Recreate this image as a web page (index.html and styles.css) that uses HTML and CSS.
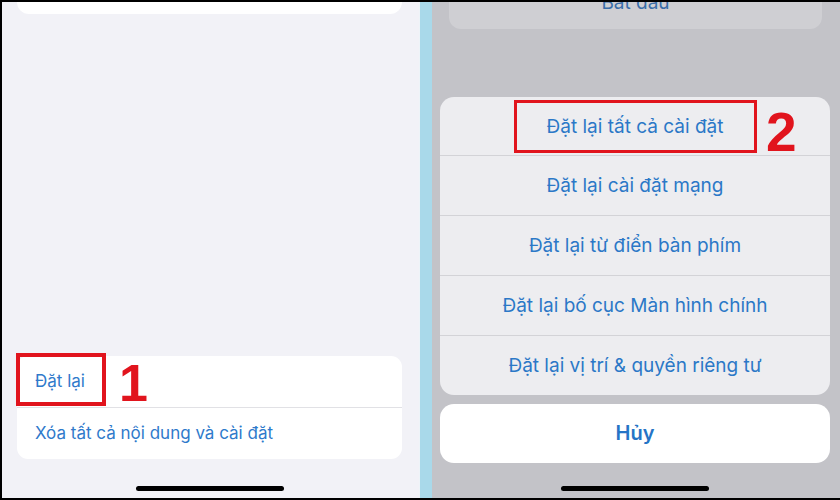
FILE: index.html
```
<!DOCTYPE html>
<html lang="vi">
<head>
    <meta charset="utf-8">
    <title>Đặt lại</title>
    <link rel="stylesheet" href="styles.css">
</head>
<body>
    <div class="frame">
        <!-- Left screen: Settings > Transfer or Reset -->
        <div class="screen screen-left">
            <div class="stub-card"></div>
            <div class="spacer"></div>
            <div class="list-card">
                <div class="list-row">Đặt lại</div>
                <div class="list-row">Xóa tất cả nội dung và cài đặt</div>
                <div class="mark-box mark-box-1"></div>
                <div class="mark-num mark-num-1">1</div>
            </div>
            <div class="home-bar"></div>
        </div>

        <div class="divider"></div>

        <!-- Right screen: reset action sheet -->
        <div class="screen screen-right">
            <div class="stub-card dim"><span>Bắt đầu</span></div>
            <div class="spacer"></div>
            <div class="sheet">
                <div class="sheet-row first">
                    <span class="mark-box mark-box-2">Đặt lại tất cả cài đặt</span>
                    <span class="mark-num mark-num-2">2</span>
                </div>
                <div class="sheet-row">Đặt lại cài đặt mạng</div>
                <div class="sheet-row">Đặt lại từ điển bàn phím</div>
                <div class="sheet-row">Đặt lại bố cục Màn hình chính</div>
                <div class="sheet-row">Đặt lại vị trí &amp; quyền riêng tư</div>
            </div>
            <div class="cancel">Hủy</div>
            <div class="home-bar"></div>
        </div>
    </div>
</body>
</html>
```

FILE: styles.css
```
body {
    margin: 0;
    background: #000;
    font-family: Inter, "Noto Sans", sans-serif;
}
.frame {
    width: 840px;
    height: 500px;
    box-sizing: border-box;
    padding: 2px 0 2px 2px;
    display: flex;
    background: #000;
}
.screen {
    display: flex;
    flex-direction: column;
    height: 496px;
    overflow: hidden;
}
.screen-left {
    width: 417px;
    background: #f2f2f7;
    padding: 0 17px 0 15px;
    box-sizing: border-box;
}
.divider {
    width: 12px;
    background: #a9d9ea;
    border-left: 1px solid #eef4f8;
}
.screen-right {
    flex: 1;
    background: #c3c3c8;
    padding: 0 10px 0 8px;
}
.spacer {
    flex: 1;
}
.stub-card {
    height: 12px;
    background: #fff;
    border-radius: 0 0 12px 12px;
}
.stub-card.dim {
    height: 27px;
    margin: 0 8px 0 9px;
    background: #cfcfd3;
    text-align: center;
    overflow: hidden;
}
.stub-card.dim span {
    display: block;
    margin-top: -9px;
    font-size: 19px;
    line-height: 20px;
    color: #3a6ea9;
}
.list-card {
    position: relative;
    background: #fff;
    border-radius: 11px;
    margin-bottom: 27px;
}
.list-row {
    height: 51px;
    line-height: 51px;
    padding-left: 18px;
    font-size: 17px;
    color: #2f7acb;
}
.list-row + .list-row {
    border-top: 1px solid #e1e1e5;
}
.home-bar {
    width: 148px;
    height: 5px;
    border-radius: 3px;
    background: #000;
    margin: 0 auto 7px;
}
.sheet {
    background: #ededf0;
    border-radius: 14px;
    overflow: hidden;
}
.sheet-row {
    position: relative;
    height: 59px;
    display: flex;
    align-items: center;
    justify-content: center;
    font-size: 19px;
    color: #2b78c7;
}
.sheet-row + .sheet-row {
    border-top: 1px solid #d3d3d7;
}
.sheet-row.first {
    height: 58px;
}
.cancel {
    margin: 9px 0 23px;
    height: 59px;
    line-height: 59px;
    background: #fff;
    border-radius: 14px;
    text-align: center;
    font-size: 20px;
    font-weight: 600;
    color: #2574c6;
}
.mark-box {
    border: 4px solid #e1141d;
    box-sizing: border-box;
}
.mark-box-1 {
    position: absolute;
    left: -1px;
    top: -3px;
    width: 90px;
    height: 53px;
}
.mark-box-2 {
    border-width: 3px;
    width: 243px;
    height: 53px;
    display: flex;
    align-items: center;
    justify-content: center;
}
.mark-num {
    position: absolute;
    font-family: "Liberation Sans", Arial, sans-serif;
    font-weight: bold;
    color: #e1141d;
    line-height: 1;
}
.mark-num-1 {
    left: 102px;
    top: 1px;
    font-size: 52px;
}
.mark-num-2 {
    left: 326px;
    top: 8px;
    font-size: 55px;
}
```
